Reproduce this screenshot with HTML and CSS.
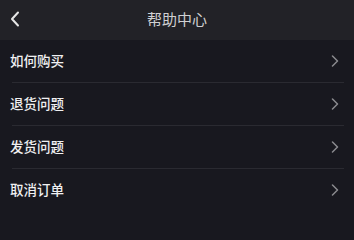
FILE: index.html
```html
<!DOCTYPE html>
<html lang="zh">
<head>
<meta charset="utf-8">
<link rel="stylesheet" href="styles.css">
</head>
<body>
<div class="page">
  <header class="topbar">
    <span class="back">
      <svg width="10" height="16" viewBox="0 0 10 16"><path d="M8 1.5 L2 8 L8 14.5" fill="none" stroke="#e6e6e6" stroke-width="2" stroke-linecap="round" stroke-linejoin="round"/></svg>
    </span>
    <h1 class="title">帮助中心</h1>
  </header>
  <ul class="list">
    <li class="item"><span class="label">如何购买</span><span class="arrow"><svg width="8" height="12" viewBox="0 0 8 12"><path d="M1.5 1 L6.5 6 L1.5 11" fill="none" stroke="#8a8a8e" stroke-width="1.5" stroke-linecap="round" stroke-linejoin="round"/></svg></span></li>
    <li class="item"><span class="label">退货问题</span><span class="arrow"><svg width="8" height="12" viewBox="0 0 8 12"><path d="M1.5 1 L6.5 6 L1.5 11" fill="none" stroke="#8a8a8e" stroke-width="1.5" stroke-linecap="round" stroke-linejoin="round"/></svg></span></li>
    <li class="item"><span class="label">发货问题</span><span class="arrow"><svg width="8" height="12" viewBox="0 0 8 12"><path d="M1.5 1 L6.5 6 L1.5 11" fill="none" stroke="#8a8a8e" stroke-width="1.5" stroke-linecap="round" stroke-linejoin="round"/></svg></span></li>
    <li class="item last"><span class="label">取消订单</span><span class="arrow"><svg width="8" height="12" viewBox="0 0 8 12"><path d="M1.5 1 L6.5 6 L1.5 11" fill="none" stroke="#8a8a8e" stroke-width="1.5" stroke-linecap="round" stroke-linejoin="round"/></svg></span></li>
  </ul>
</div>
</body>
</html>
```
FILE: styles.css
```css
html, body {
  margin: 0;
  padding: 0;
  background: #18181f;
}
body {
  font-family: "Noto Sans CJK SC", "Noto Sans", sans-serif;
  width: 354px;
  height: 212px;
  overflow: hidden;
}
.page {
  display: flex;
  flex-direction: column;
}
.topbar {
  height: 40px;
  background: #222227;
  display: grid;
  grid-template-columns: 40px 1fr 40px;
  align-items: center;
}
.back {
  display: flex;
  align-items: center;
  padding-left: 10px;
  padding-bottom: 3px;
}
.back svg {
  display: block;
}
.title {
  margin: 0;
  font-size: 15px;
  font-weight: normal;
  color: #d0d0d2;
  text-align: center;
  line-height: 1;
  padding-bottom: 4px;
}
.list {
  list-style: none;
  margin: 0;
  padding: 0;
}
.item {
  height: 42px;
  display: flex;
  align-items: center;
  justify-content: space-between;
  padding-left: 10px;
  padding-right: 15px;
  border-bottom: 1px solid transparent;
  background-image: linear-gradient(#2a2a31, #2a2a31);
  background-size: 332px 1px;
  background-position: 12px 42px;
  background-repeat: no-repeat;
  background-origin: border-box;
}
.item.last {
  background-image: none;
}
.label {
  font-size: 13.5px;
  font-weight: 500;
  color: #f0f0f2;
  line-height: 1;
  padding-bottom: 1px;
}
.arrow {
  display: flex;
  align-items: center;
}
.arrow svg {
  display: block;
}
```
